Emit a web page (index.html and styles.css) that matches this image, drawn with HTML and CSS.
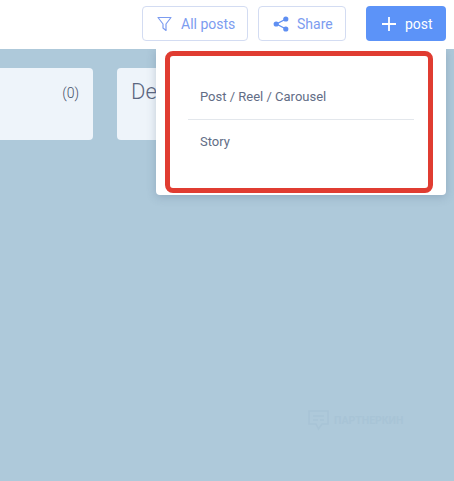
FILE: index.html
```html
<!DOCTYPE html>
<html lang="en">
<head>
    <meta charset="UTF-8">
    <meta name="viewport" content="width=device-width, initial-scale=1.0">
    <title>Posts</title>
    <link rel="stylesheet" href="styles.css">
</head>
<body>
    <header class="topbar">
        <button class="btn btn-outline btn-filter">
            <svg width="15" height="16" viewBox="0 0 15 16" fill="none" stroke="currentColor" stroke-width="1.2" stroke-linejoin="round"><path d="M1 1.500h13L9 8v6.500L6 12V8z"/></svg>
            All posts
        </button>
        <button class="btn btn-outline btn-share">
            <svg class="share-icon" width="16" height="16" viewBox="0 0 16 16" fill="currentColor" stroke="currentColor"><path d="M13 3 3.500 8l9.500 5" fill="none" stroke-width="1.400"/><circle cx="3.200" cy="8" r="2.600" stroke="none"/><circle cx="12.800" cy="3" r="2.600" stroke="none"/><circle cx="12.800" cy="13" r="2.600" stroke="none"/></svg>
            Share
        </button>
        <button class="btn btn-primary">
            <svg width="16" height="16" viewBox="0 0 16 16" fill="none" stroke="currentColor" stroke-width="1.800"><path d="M8 1v14M1 8h14"/></svg>
            post
        </button>
    </header>

    <main class="board">
        <div class="column column-first"><span class="count">(0)</span></div>
        <div class="column column-second"><span class="column-title">Denied</span></div>

        <div class="dropdown">
            <div class="highlight">
                <a class="dropdown-item">Post / Reel / Carousel</a>
                <a class="dropdown-item">Story</a>
            </div>
        </div>

        <div class="watermark">
            <svg width="21" height="21" viewBox="0 0 21 21" fill="none" stroke="currentColor" stroke-width="1.600"><path d="M1 1h19v13h-6l-3.500 5L8 14H1z"/><path d="M5 6h11M5 10h5M12 10h4"/></svg>
            <span>ПАРТНЕРКИН</span>
        </div>
    </main>
</body>
</html>
```

FILE: styles.css
```css
* {
    box-sizing: border-box;
}

body {
    margin: 0;
    height: 481px;
    overflow: hidden;
    font-family: Roboto, sans-serif;
    background-color: #aec9da;
}

.topbar {
    height: 49px;
    padding: 6px 8px 0 0;
    display: flex;
    justify-content: flex-end;
    gap: 10px;
    background: white;
}

.btn {
    height: 35px;
    display: flex;
    align-items: center;
    border-radius: 4px;
    font-family: inherit;
    font-size: 14px;
    padding: 0;
}

.btn-outline {
    background: white;
    border: 1px solid #d3dcf2;
    color: #7c9cf0;
}

.btn-filter {
    width: 106px;
    padding-left: 14px;
    gap: 9px;
}

.btn-share {
    width: 88px;
    padding-left: 14px;
    gap: 8px;
}

.share-icon {
    color: #5f8ff2;
}

.btn-primary {
    width: 80px;
    margin-left: 10px;
    padding-left: 15px;
    gap: 8px;
    border: none;
    background-color: #5c93f8;
    color: white;
}

.board {
    position: relative;
    height: 432px;
    padding-top: 19px;
    display: flex;
    gap: 24px;
    overflow: hidden;
}

.column {
    height: 72px;
    flex-shrink: 0;
    background-color: #eef4fa;
    border-radius: 4px;
    color: #5b6680;
}

.column-first {
    width: 103px;
    margin-left: -10px;
    padding: 17px 14px 0 0;
    text-align: right;
    font-size: 14px;
    font-weight: 300;
    color: #46526b;
}

.column-second {
    width: 320px;
    padding: 11px 0 0 14px;
    font-size: 22px;
    font-weight: 300;
}

.dropdown {
    position: absolute;
    top: 0;
    left: 156px;
    width: 290px;
    height: 146px;
    padding: 2px 0 0 9px;
    background: white;
    border-radius: 0 0 4px 4px;
    box-shadow: 0 2px 10px rgba(60, 80, 110, 0.25);
}

.highlight {
    width: 268px;
    height: 142px;
    padding: 17px 14px 0 18px;
    border: 5px solid #e03c31;
    border-radius: 8px;
}

.dropdown-item {
    display: block;
    height: 46px;
    padding-left: 12px;
    line-height: 44px;
    font-size: 13px;
    color: #626d86;
}

.dropdown-item:first-child {
    height: 47px;
    line-height: 48px;
    border-bottom: 1px solid #e3e7ec;
}

.watermark {
    position: absolute;
    top: 361px;
    left: 308px;
    display: flex;
    align-items: center;
    gap: 5px;
    color: #a8c4d6;
    font-size: 10.5px;
    font-weight: 700;
}
```
